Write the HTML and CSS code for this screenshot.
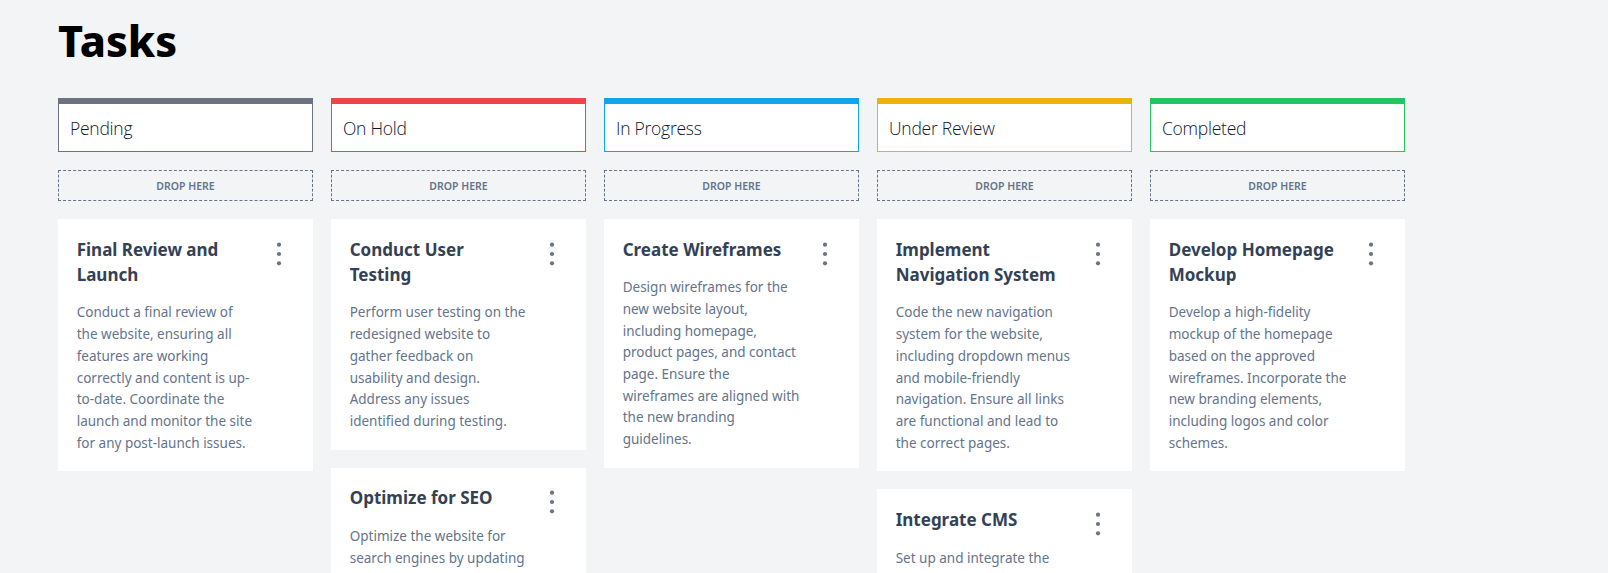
FILE: index.html
```html
<!DOCTYPE html>
<html lang="en">
<head>
<meta charset="utf-8">
<title>Tasks</title>
<link rel="stylesheet" href="styles.css">
</head>
<body>
<main class="page">
  <h1 class="page-title">Tasks</h1>
  <div class="board">
    <section class="column">
      <header class="column-header status-pending"><h2>Pending</h2></header>
      <div class="dropzone">Drop here</div>
      <article class="card">
        <div class="card-body">
          <h3 class="card-title">Final Review and Launch</h3>
          <p class="card-desc">Conduct a final review of the website, ensuring all features are working correctly and content is up-to-date. Coordinate the launch and monitor the site for any post-launch issues.</p>
        </div>
        <button class="card-menu" type="button" aria-label="Options"><svg viewBox="0 0 30 30" width="30" height="30"><circle cx="15" cy="5.7" r="2.1"/><circle cx="15" cy="15" r="2.1"/><circle cx="15" cy="24.3" r="2.1"/></svg></button>
      </article>
    </section>
    <section class="column">
      <header class="column-header status-hold"><h2>On Hold</h2></header>
      <div class="dropzone">Drop here</div>
      <article class="card">
        <div class="card-body">
          <h3 class="card-title">Conduct User Testing</h3>
          <p class="card-desc">Perform user testing on the redesigned website to gather feedback on usability and design. Address any issues identified during testing.</p>
        </div>
        <button class="card-menu" type="button" aria-label="Options"><svg viewBox="0 0 30 30" width="30" height="30"><circle cx="15" cy="5.7" r="2.1"/><circle cx="15" cy="15" r="2.1"/><circle cx="15" cy="24.3" r="2.1"/></svg></button>
      </article>
      <article class="card">
        <div class="card-body">
          <h3 class="card-title">Optimize for SEO</h3>
          <p class="card-desc">Optimize the website for search engines by updating meta tags, improving page load speed, and refining content keywords.</p>
        </div>
        <button class="card-menu" type="button" aria-label="Options"><svg viewBox="0 0 30 30" width="30" height="30"><circle cx="15" cy="5.7" r="2.1"/><circle cx="15" cy="15" r="2.1"/><circle cx="15" cy="24.3" r="2.1"/></svg></button>
      </article>
    </section>
    <section class="column">
      <header class="column-header status-progress"><h2>In Progress</h2></header>
      <div class="dropzone">Drop here</div>
      <article class="card">
        <div class="card-body">
          <h3 class="card-title">Create Wireframes</h3>
          <p class="card-desc">Design wireframes for the new website layout, including homepage, product pages, and contact page. Ensure the wireframes are aligned with the new branding guidelines.</p>
        </div>
        <button class="card-menu" type="button" aria-label="Options"><svg viewBox="0 0 30 30" width="30" height="30"><circle cx="15" cy="5.7" r="2.1"/><circle cx="15" cy="15" r="2.1"/><circle cx="15" cy="24.3" r="2.1"/></svg></button>
      </article>
    </section>
    <section class="column">
      <header class="column-header status-review"><h2>Under Review</h2></header>
      <div class="dropzone">Drop here</div>
      <article class="card">
        <div class="card-body">
          <h3 class="card-title">Implement Navigation System</h3>
          <p class="card-desc">Code the new navigation system for the website, including dropdown menus and mobile-friendly navigation. Ensure all links are functional and lead to the correct pages.</p>
        </div>
        <button class="card-menu" type="button" aria-label="Options"><svg viewBox="0 0 30 30" width="30" height="30"><circle cx="15" cy="5.7" r="2.1"/><circle cx="15" cy="15" r="2.1"/><circle cx="15" cy="24.3" r="2.1"/></svg></button>
      </article>
      <article class="card">
        <div class="card-body">
          <h3 class="card-title">Integrate CMS</h3>
          <p class="card-desc">Set up and integrate the content management system so the team can update website content easily.</p>
        </div>
        <button class="card-menu" type="button" aria-label="Options"><svg viewBox="0 0 30 30" width="30" height="30"><circle cx="15" cy="5.7" r="2.1"/><circle cx="15" cy="15" r="2.1"/><circle cx="15" cy="24.3" r="2.1"/></svg></button>
      </article>
    </section>
    <section class="column">
      <header class="column-header status-done"><h2>Completed</h2></header>
      <div class="dropzone">Drop here</div>
      <article class="card">
        <div class="card-body">
          <h3 class="card-title">Develop Homepage Mockup</h3>
          <p class="card-desc">Develop a high-fidelity mockup of the homepage based on the approved wireframes. Incorporate the new branding elements, including logos and color schemes.</p>
        </div>
        <button class="card-menu" type="button" aria-label="Options"><svg viewBox="0 0 30 30" width="30" height="30"><circle cx="15" cy="5.7" r="2.1"/><circle cx="15" cy="15" r="2.1"/><circle cx="15" cy="24.3" r="2.1"/></svg></button>
      </article>
    </section>
  </div>
</main>
</body>
</html>
```

FILE: styles.css
```css
* { box-sizing: border-box; }

body {
  margin: 0;
  background: #f3f4f6;
  font-family: "Noto Sans", "Open Sans", sans-serif;
  color: #1f2937;
}

.page {
  padding: 13px 58px 0;
}

.page-title {
  margin: 0 0 29px;
  font-size: 43px;
  line-height: 56px;
  font-weight: 800;
  color: #000;
}

.board {
  display: flex;
  gap: 18px;
  align-items: flex-start;
}

.column {
  width: 255px;
  display: flex;
  flex-direction: column;
  gap: 18px;
}

.column-header {
  height: 54px;
  background: #fff;
  border: 1px solid #6b7280;
  border-top-width: 6px;
  display: flex;
  align-items: center;
  padding: 0 11px;
}

.column-header h2 {
  margin: 0;
  font-family: "Open Sans", "Noto Sans", sans-serif;
  font-size: 17.5px;
  font-weight: 300;
  letter-spacing: -0.25px;
  color: #0f172a;
}

.status-pending { border-color: #6b7280; }
.status-hold { border-color: #ef4444; }
.status-progress { border-color: #0ea5e9; }
.status-review { border-color: #eab308; }
.status-done { border-color: #22c55e; }

.dropzone {
  height: 31px;
  border: 1px dashed #64748b;
  display: flex;
  align-items: center;
  justify-content: center;
  font-size: 10.5px;
  font-weight: 600;
  text-transform: uppercase;
  color: #64748b;
}

.card {
  background: #fff;
  padding: 17.5px 18.7px 17px;
  display: flex;
  gap: 8.8px;
}

.card-body {
  flex: 1;
  min-width: 0;
}

.card-title {
  margin: 0 0 15.4px;
  font-size: 17px;
  line-height: 25.3px;
  font-weight: 700;
  color: #334155;
}

.card-desc {
  margin: 0;
  font-size: 13.5px;
  line-height: 21.7px;
  color: #64748b;
}

.card-menu {
  flex: none;
  width: 30px;
  height: 34px;
  padding: 0;
  border: 0;
  background: none;
  display: flex;
  align-items: center;
  justify-content: center;
}

.card-menu svg { fill: #6b7280; }
```
